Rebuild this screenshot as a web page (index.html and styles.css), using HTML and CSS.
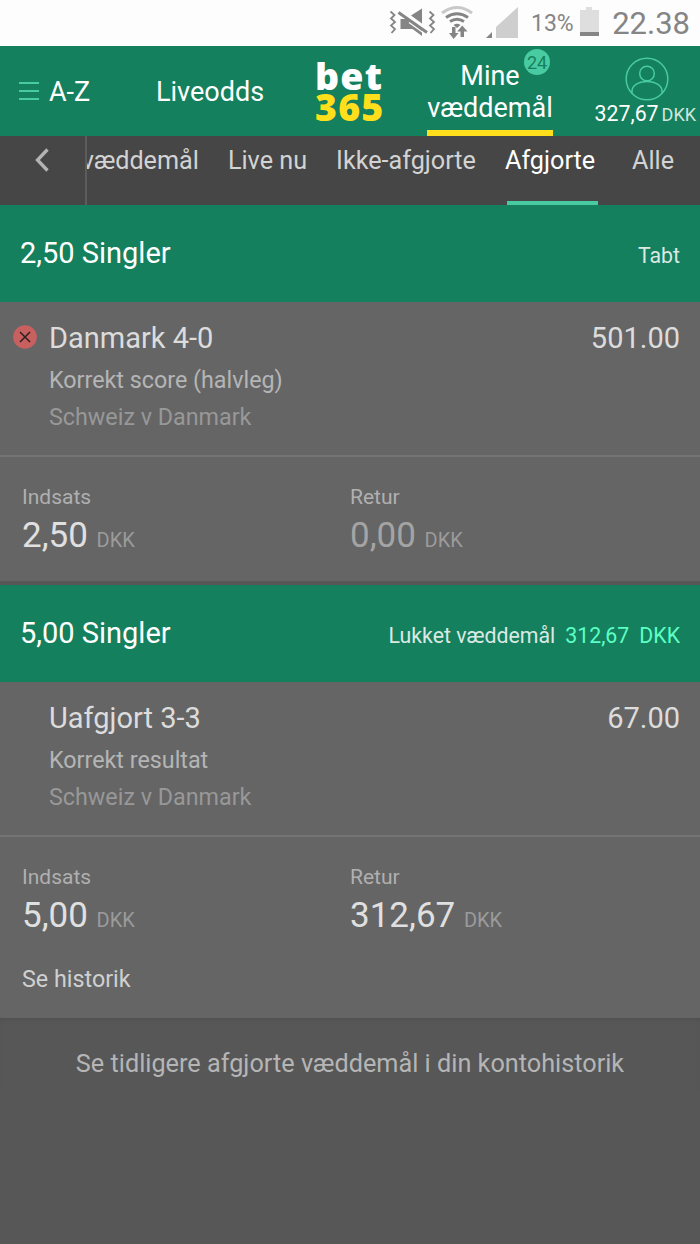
FILE: index.html
```html
<!doctype html>
<html lang="da">
	<head>
		<meta charset="utf-8">
		<title>Mine væddemål</title>
		<link rel="stylesheet" href="styles.css">
	</head>
	<body>
		<div class="status-bar">
			<svg class="status-icons" width="136" height="46" viewBox="384 0 136 46">
				<!-- vibrate / muted -->
				<g fill="none" stroke="#858585" stroke-width="1.8">
					<path d="M390.500 11.500l4 3.500-3.500 3.500 4 3.500-4 3.500 4 3.500-3.500 4"/>
					<path d="M429.500 11.500l4 3.500-3.500 3.500 4 3.500-4 3.500 4 3.500-3.500 4"/>
				</g>
				<path d="M411 15.500L422 8.500V23.500zM400.500 19h8.500L422 28v8l-9.500-7h-12z" fill="#858585"/>
				<path d="M399 10.500l29 20" stroke="#fdfdfd" stroke-width="2"/>
				<path d="M398.500 12.500L427 32.500" stroke="#858585" stroke-width="3"/>
				<path d="M409 22.500l16 11.500" stroke="#fdfdfd" stroke-width="1.2"/>
				<!-- wifi -->
				<g fill="none" stroke="#858585" stroke-width="3">
					<path d="M442 13q15-11 30 0" stroke="#c9c9c9"/>
					<path d="M446 17.500q11-7.500 22 0"/>
					<path d="M450 21.500q7-4.500 14 0"/>
				</g>
				<path d="M453.500 25q3.500-2.500 7 0l-3.500 3z" fill="#858585"/>
				<path d="M452 27h3.500v6h3l-4.800 6-4.700-6h3zM460.500 37h3.500v-5.500h3.500L462.200 25.500l-5 6h3.300z" fill="#858585"/>
				<!-- signal -->
				<path d="M496 38V27l22-20v31z" fill="#cecece"/>
				<path d="M486 38h6v-6z" fill="#858585"/>
			</svg>
			<span class="percent">13%</span>
			<svg class="battery" width="20" height="46" viewBox="579 0 20 46">
				<path d="M580 10h6V7h6v3h7v22h-19z" fill="#dedede"/>
				<path d="M580 32h19v4h-19z" fill="#858585"/>
			</svg>
			<span class="clock">22.38</span>
		</div>

		<header class="header">
			<div class="az">
				<svg width="20" height="20" viewBox="0 0 20 20">
					<path d="M0 2h20M0 10h20M0 18h20" stroke="#49cba2" stroke-width="1.800"/>
				</svg>
				<span>A-Z</span>
			</div>
			<div class="live">Liveodds</div>
			<svg class="logo" width="70" height="90" viewBox="0 0 70 90">
				<text><tspan x="0" y="43.500" fill="#fff">bet</tspan><tspan x="0" y="74.500" fill="#ffdf1b">365</tspan></text>
			</svg>
			<div class="my-bets">
				Mine<br>væddemål
				<span class="badge">24</span>
			</div>
			<div class="account">
				<svg class="user" width="44" height="44" viewBox="0 0 44 44" fill="none" stroke="#49cba2" stroke-width="1.500">
					<circle cx="22" cy="22" r="20.800"/>
					<circle cx="22" cy="16.500" r="7.300"/>
					<path d="M7 36.500V34C7 29 13 24.500 22 24.500S37 29 37 34v2.500"/>
				</svg>
				<div class="balance">327,67<small>DKK</small></div>
			</div>
		</header>

		<nav class="tabs">
			<div class="back">
				<svg width="16" height="26" viewBox="0 0 16 26">
					<path d="M13.500 2.500L3.500 13l10 10.500" fill="none" stroke="#b4b4b4" stroke-width="3.300"/>
				</svg>
			</div>
			<div class="tab-list">
				<span class="tab">væddemål</span>
				<span class="tab">Live nu</span>
				<span class="tab">Ikke-afgjorte</span>
				<span class="tab active">Afgjorte</span>
				<span class="tab last">Alle</span>
			</div>
		</nav>

		<section class="bet">
			<div class="bet-header">
				<span class="bet-title">2,50 Singler</span>
				<span class="bet-state">Tabt</span>
			</div>
			<div class="selection">
				<svg class="lost" width="24" height="24" viewBox="0 0 24 24">
					<circle cx="12" cy="12" r="11.800" fill="#c86060"/>
					<path d="M7 7l10 10M17 7L7 17" stroke="#2c2020" stroke-width="1.500"/>
				</svg>
				<div class="pick"><span>Danmark 4-0</span><span>501.00</span></div>
				<div class="market">Korrekt score (halvleg)</div>
				<div class="match">Schweiz v Danmark</div>
			</div>
			<div class="summary">
				<div class="amount">
					<div class="label">Indsats</div>
					<div class="value">2,50 <small>DKK</small></div>
				</div>
				<div class="amount">
					<div class="label">Retur</div>
					<div class="value zero">0,00 <small>DKK</small></div>
				</div>
			</div>
		</section>

		<section class="bet">
			<div class="bet-header">
				<span class="bet-title">5,00 Singler</span>
				<span class="bet-state">Lukket væddemål<span class="paid">312,67</span><span class="paid">DKK</span></span>
			</div>
			<div class="selection">
				<div class="pick"><span>Uafgjort 3-3</span><span>67.00</span></div>
				<div class="market">Korrekt resultat</div>
				<div class="match">Schweiz v Danmark</div>
			</div>
			<div class="summary">
				<div class="amount">
					<div class="label">Indsats</div>
					<div class="value">5,00 <small>DKK</small></div>
				</div>
				<div class="amount">
					<div class="label">Retur</div>
					<div class="value">312,67 <small>DKK</small></div>
				</div>
				<div class="history">Se historik</div>
			</div>
		</section>

		<footer class="more">Se tidligere afgjorte væddemål i din kontohistorik</footer>
	</body>
</html>
```
FILE: styles.css
```css
* {
	box-sizing: border-box;
}

body {
	margin: 0;
	min-height: 1244px;
	background: #575757;
	color: #fff;
	font-family: Roboto, "Liberation Sans", sans-serif;
	white-space: nowrap;
}

svg {
	display: block;
	flex: none;
}

/* phone status bar */
.status-bar {
	display: flex;
	justify-content: flex-end;
	height: 46px;
	padding-right: 10px;
	background: #fdfdfd;
	color: #858585;
	line-height: 47px;
}

.percent {
	width: 59px;
	padding-left: 11px;
	font-size: 23px;
}

.clock {
	width: 91px;
	text-align: right;
	font-size: 31px;
}

/* top navigation */
.header {
	display: flex;
	height: 90px;
	background: #15805d;
	font-size: 27px;
	line-height: 92px;
}

.az {
	display: flex;
	gap: 10px;
	width: 156px;
	padding-left: 19px;
}

.az svg {
	margin-top: 35px;
}

.live {
	width: 159px;
}

.logo {
	font-family: "Open Sans", "Noto Sans", sans-serif;
	font-size: 37.5px;
	font-weight: 800;
	letter-spacing: 1.2px;
}

.my-bets {
	position: relative;
	width: 126px;
	margin-left: 42px;
	padding-top: 14px;
	border-bottom: 6px solid #ffdf1b;
	line-height: 32px;
	text-align: center;
}

.badge {
	position: absolute;
	top: 3px;
	left: 97px;
	width: 26px;
	height: 26px;
	border-radius: 50%;
	background: #49cba2;
	color: #15805d;
	font-size: 18px;
	line-height: 27px;
}

.account {
	display: flex;
	flex: 1;
	flex-direction: column;
	align-items: flex-end;
	padding: 11px 4px 0 0;
}

.user {
	margin-right: 27px;
}

.balance {
	font-size: 21.3px;
	line-height: 25px;
}

.balance small {
	margin-left: 3px;
	color: #d0e6df;
	font-size: 18px;
}

/* filter tabs */
.tabs {
	display: flex;
	height: 69px;
	background: #464646;
	color: #d3d3d3;
	font-size: 25.2px;
	line-height: 50px;
}

.back {
	width: 87px;
	padding: 11px 0 0 34px;
	border-right: 2px solid #5c5c5c;
}

.tab-list {
	display: flex;
	flex: 1;
	justify-content: flex-end;
	gap: 29px;
	min-width: 0;
	padding-right: 26px;
	overflow: hidden;
}

.tab {
	flex: none;
}

.active {
	width: 91px;
	margin-left: 2px;
	border-bottom: 4px solid #49cba2;
	color: #fff;
	text-indent: -2px;
}

.last {
	padding-left: 5px;
}

/* bets */
.bet + .bet {
	margin-top: 4px;
}

.bet-header {
	display: flex;
	justify-content: space-between;
	align-items: baseline;
	height: 97px;
	padding: 0 20px;
	background: #15805d;
	line-height: 97px;
}

.bet-title {
	font-size: 29px;
}

.bet-state {
	color: #dbe9e4;
	font-size: 21.3px;
}

.paid {
	margin-left: 10px;
	color: #5bffc5;
}

.selection {
	position: relative;
	height: 155px;
	padding: 15px 20px 0 49px;
	border-bottom: 2px solid #747474;
	background: #656565;
}

.lost {
	position: absolute;
	top: 23px;
	left: 13px;
}

.pick {
	display: flex;
	justify-content: space-between;
	color: #dcdcdc;
	font-size: 29px;
	line-height: 42px;
}

.market {
	color: #b5b5b5;
	font-size: 23.3px;
	line-height: 43px;
}

.match {
	color: #989898;
	font-size: 23.3px;
	line-height: 31px;
}

.summary {
	display: flex;
	flex-wrap: wrap;
	padding: 23px 0 25px 22px;
	background: #656565;
}

.amount {
	width: 328px;
}

.label {
	color: #b0b0b0;
	font-size: 21px;
	line-height: 34px;
}

.value {
	height: 42px;
	color: #e0e0e0;
	font-size: 35px;
	line-height: 44px;
}

.zero {
	color: #a4a4a4;
}

.value small {
	color: #9b9b9b;
	font-size: 20px;
}

.history {
	width: 100%;
	height: 40px;
	margin: 22px 0 -5px;
	color: #d0d0d0;
	font-size: 23.3px;
	line-height: 42px;
}

.more {
	padding-top: 20px;
	box-shadow: inset 0 4px 4px -2px #505050;
	color: #b5b5b5;
	font-size: 25.25px;
	line-height: 52px;
	text-align: center;
}
```
